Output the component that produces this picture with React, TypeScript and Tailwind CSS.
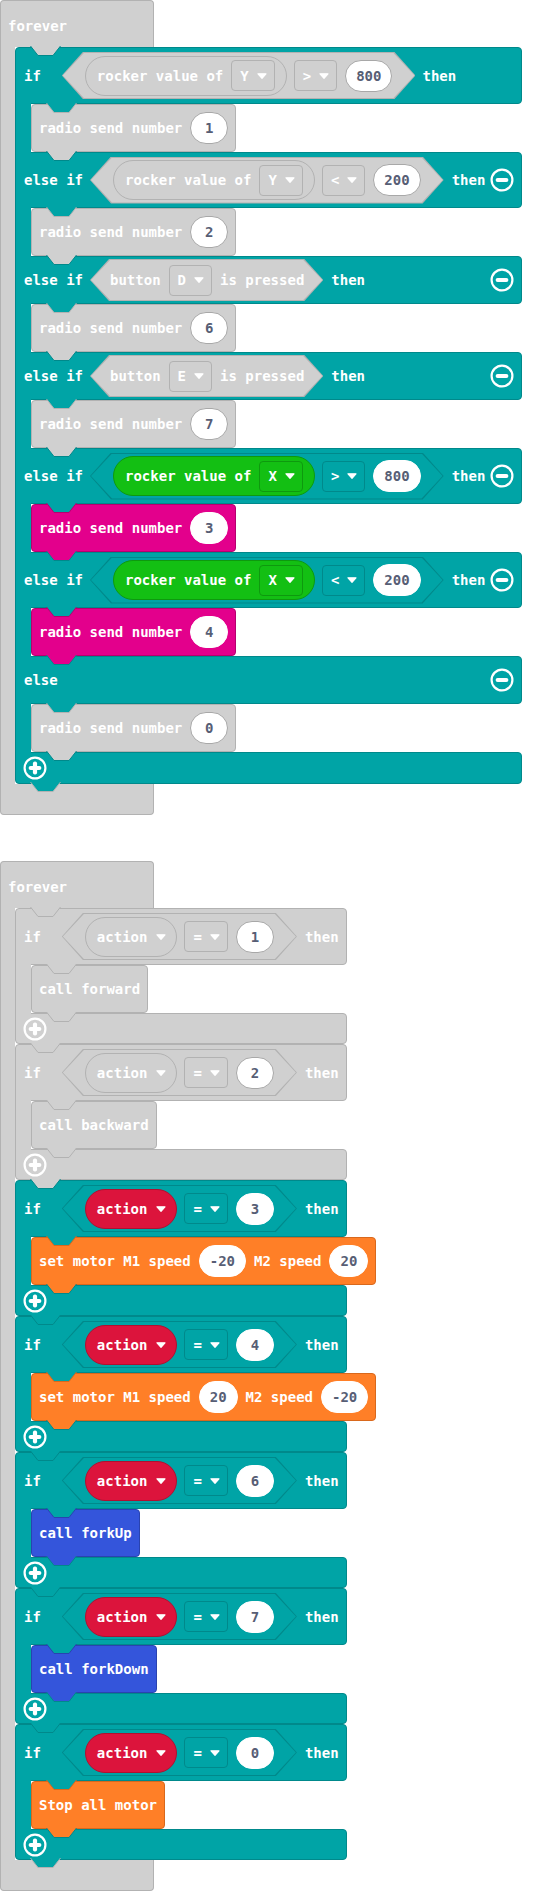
import React from "react";
import clsx from "clsx";

type Theme = { bg: string; border: string; stroke: string; fill: string; dark: string };

const GREY: Theme = { bg: "bg-[#d0d0d0]", border: "border-[#b2b2b2]", stroke: "bg-[#b2b2b2]", fill: "#d0d0d0", dark: "#b2b2b2" };
const TEAL: Theme = { bg: "bg-[#00a4a6]", border: "border-[#00898b]", stroke: "bg-[#00898b]", fill: "#00a4a6", dark: "#00898b" };
const PINK: Theme = { bg: "bg-[#e3008c]", border: "border-[#b6006f]", stroke: "bg-[#b6006f]", fill: "#e3008c", dark: "#b6006f" };
const GREEN: Theme = { bg: "bg-[#13bf13]", border: "border-[#0e990e]", stroke: "bg-[#0e990e]", fill: "#13bf13", dark: "#0e990e" };
const RED: Theme = { bg: "bg-[#dc143c]", border: "border-[#b01030]", stroke: "bg-[#b01030]", fill: "#dc143c", dark: "#b01030" };
const ORANGE: Theme = { bg: "bg-[#ff7f27]", border: "border-[#d9681c]", stroke: "bg-[#d9681c]", fill: "#ff7f27", dark: "#d9681c" };
const BLUE: Theme = { bg: "bg-[#3455db]", border: "border-[#2943b0]", stroke: "bg-[#2943b0]", fill: "#3455db", dark: "#2943b0" };

const CLIP_47 = "[clip-path:polygon(21px_0,calc(100%_-_21px)_0,100%_50%,calc(100%_-_21px)_100%,21px_100%,0_50%)]";
const CLIP_42 = "[clip-path:polygon(19px_0,calc(100%_-_19px)_0,100%_50%,calc(100%_-_19px)_100%,19px_100%,0_50%)]";

// the tab of the block above, sitting in this block's notch
function Notch({ fill, stroke, at }: { fill: string; stroke: string; at: string }) {
  return (
    <svg width="31" height="11" viewBox="0 0 31 11" className={clsx("absolute top-[-2px] z-[2]", at)}>
      <path d="M0.5 0 L8 9.5 L23 9.5 L30.5 0" fill={fill} stroke={stroke} />
    </svg>
  );
}

function Arrow() {
  return (
    <svg width="10" height="6" viewBox="0 0 10 6" className="shrink-0">
      <path d="M1 0.8 H9 L5 5.3 Z" fill="white" stroke="white" strokeWidth="1.2" strokeLinejoin="round" />
    </svg>
  );
}

function Minus() {
  return (
    <svg width="24" height="24" viewBox="0 0 24 24">
      <circle cx="12" cy="12" r="10.4" fill="none" stroke="white" strokeWidth="2.2" />
      <rect x="5.6" y="9.9" width="12.8" height="4.2" rx="2" fill="white" />
    </svg>
  );
}

function Plus() {
  return (
    <svg width="24" height="24" viewBox="0 0 24 24">
      <circle cx="12" cy="12" r="10.4" fill="none" stroke="white" strokeWidth="2.2" />
      <rect x="5.6" y="9.9" width="12.8" height="4.2" rx="2" fill="white" />
      <rect x="9.9" y="5.6" width="4.2" height="12.8" rx="2" fill="white" />
    </svg>
  );
}

function Val({ v, grey, className }: { v: string; grey?: boolean; className?: string }) {
  return (
    <span
      className={clsx(
        "flex h-[32px] min-w-[38px] shrink-0 items-center justify-center rounded-full border bg-white px-[10px] text-[#575e75]",
        grey ? "border-[#a8a8a8]" : "border-white",
        className
      )}
    >
      {v}
    </span>
  );
}

function Dd({ t, children }: { t: Theme; children: React.ReactNode }) {
  return (
    <span className={clsx("flex h-[31px] shrink-0 items-center gap-[8px] rounded-[4px] border pl-[8px] pr-[7px]", t.border)}>
      {children}
      <Arrow />
    </span>
  );
}

function Rocker({ t, axis }: { t: Theme; axis: string }) {
  return (
    <span className={clsx("flex h-[40px] shrink-0 items-center gap-[8px] rounded-full border px-[11px]", t.bg, t.border)}>
      rocker value of
      <Dd t={t}>{axis}</Dd>
    </span>
  );
}

function Action({ t }: { t: Theme }) {
  return (
    <span className={clsx("flex h-[40px] shrink-0 items-center gap-[9px] rounded-full border pl-[11px] pr-[10px]", t.bg, t.border)}>
      action
      <Arrow />
    </span>
  );
}

function Hex({ t, small, className, children }: { t: Theme; small?: boolean; className?: string; children: React.ReactNode }) {
  const clip = small ? CLIP_42 : CLIP_47;
  return (
    <div className={clsx("relative flex shrink-0 items-center", small ? "h-[42px] pl-[20px] pr-[19px]" : "h-[47px] px-[23px]", className)}>
      <div className={clsx("absolute inset-0", t.stroke, clip)} />
      <div className={clsx("absolute inset-px", t.bg, clip)} />
      <div className={clsx("relative flex items-center", small ? "gap-[8px]" : "gap-[7px]")}>{children}</div>
    </div>
  );
}

function CondRow({
  t,
  h,
  label,
  notch,
  notchAt,
  minus,
  first,
  children,
}: {
  t: Theme;
  h: string;
  label: string;
  notch: Theme;
  notchAt: string;
  minus?: boolean;
  first?: boolean;
  children?: React.ReactNode;
}) {
  return (
    <div
      className={clsx(
        "relative flex shrink-0 items-center border pl-[8px] pr-[7px]",
        t.bg,
        t.border,
        h,
        first ? "rounded-tl-[4px] rounded-r-[4px]" : "rounded-r-[4px]"
      )}
    >
      <Notch fill={notch.fill} stroke={t.dark} at={notchAt} />
      <span>{label}</span>
      {children}
      {minus && (
        <span className="ml-auto flex">
          <Minus />
        </span>
      )}
    </div>
  );
}

function PlusRow({ t, h, notch }: { t: Theme; h: string; notch: Theme }) {
  return (
    <div className={clsx("relative flex shrink-0 items-center rounded-r-[4px] rounded-bl-[4px] border pl-[7px]", t.bg, t.border, h)}>
      <Notch fill={notch.fill} stroke={t.dark} at="left-[30px]" />
      <Plus />
    </div>
  );
}

function Body({ t, children }: { t: Theme; children: React.ReactNode }) {
  return (
    <div className="flex items-start">
      <div className={clsx("relative z-[1] -my-px w-[16px] shrink-0 self-stretch border-l", t.bg, t.border)} />
      {children}
    </div>
  );
}

function Stmt({ t, above, children }: { t: Theme; above: Theme; children: React.ReactNode }) {
  return (
    <div className={clsx("relative flex h-[48px] shrink-0 items-center gap-[8px] rounded-[4px] border px-[7px]", t.bg, t.border)}>
      <Notch fill={above.fill} stroke={t.dark} at="left-[14px]" />
      {children}
    </div>
  );
}

function Radio({ t, v }: { t: Theme; v: string }) {
  return (
    <Stmt t={t} above={TEAL}>
      radio send number
      <Val v={v} grey={t === GREY} />
    </Stmt>
  );
}

function Forever({ className, children }: { className?: string; children: React.ReactNode }) {
  return (
    <div className={clsx("flex flex-col", className)}>
      <div className={clsx("flex h-[47px] w-[154px] items-center rounded-t-[4px] border-x border-t pl-[7px] pt-[3px]", GREY.bg, GREY.border)}>
        forever
      </div>
      <div className="flex">
        <div className={clsx("w-[15px] shrink-0 border-l", GREY.bg, GREY.border)} />
        <div className="flex flex-col items-start">{children}</div>
      </div>
      <div className={clsx("relative h-[31px] w-[154px] rounded-b-[4px] border-x border-b", GREY.bg, GREY.border)}>
        <Notch fill={TEAL.fill} stroke={GREY.dark} at="left-[29px]" />
      </div>
    </div>
  );
}

function ActionIf({ t, v, above, bodyT, children }: { t: Theme; v: string; above: Theme; bodyT: Theme; children: React.ReactNode }) {
  const grey = t === GREY;
  return (
    <div className="flex w-[332px] flex-col">
      <CondRow t={t} h="h-[57px]" label="if" notch={above} notchAt="left-[14px]" first>
        <Hex t={t} className="ml-[21px]">
          <Action t={grey ? GREY : RED} />
          <Dd t={t}>=</Dd>
          <Val v={v} grey={grey} className="ml-px" />
        </Hex>
        <span className="ml-[8px]">then</span>
      </CondRow>
      <Body t={t}>
        <Stmt t={bodyT} above={t}>
          {children}
        </Stmt>
      </Body>
      <PlusRow t={t} h="h-[31px]" notch={bodyT} />
    </div>
  );
}

function Motor({ a, b }: { a: string; b: string }) {
  return (
    <>
      set motor M1 speed
      <Val v={a} />
      M2 speed
      <Val v={b} />
    </>
  );
}

export default function App() {
  return (
    <div className="min-h-screen whitespace-nowrap bg-white font-['DejaVu_Sans_Mono',monospace] text-[14px] font-bold leading-none text-white">
      <Forever>
        <div className="flex w-[507px] flex-col">
          <CondRow t={TEAL} h="h-[57px]" label="if" notch={GREY} notchAt="left-[14px]" first>
            <Hex t={GREY} className="ml-[21px]">
              <Rocker t={GREY} axis="Y" />
              <Dd t={GREY}>&gt;</Dd>
              <Val v="800" grey className="ml-px" />
            </Hex>
            <span className="ml-[7px]">then</span>
          </CondRow>
          <Body t={TEAL}>
            <Radio t={GREY} v="1" />
          </Body>
          <CondRow t={TEAL} h="h-[56px]" label="else if" notch={GREY} notchAt="left-[30px]" minus>
            <Hex t={GREY} className="ml-[7px]">
              <Rocker t={GREY} axis="Y" />
              <Dd t={GREY}>&lt;</Dd>
              <Val v="200" grey className="ml-px" />
            </Hex>
            <span className="ml-[8px]">then</span>
          </CondRow>
          <Body t={TEAL}>
            <Radio t={GREY} v="2" />
          </Body>
          <CondRow t={TEAL} h="h-[48px]" label="else if" notch={GREY} notchAt="left-[30px]" minus>
            <Hex t={GREY} small className="ml-[7px]">
              button
              <Dd t={GREY}>D</Dd>
              is pressed
            </Hex>
            <span className="ml-[8px]">then</span>
          </CondRow>
          <Body t={TEAL}>
            <Radio t={GREY} v="6" />
          </Body>
          <CondRow t={TEAL} h="h-[48px]" label="else if" notch={GREY} notchAt="left-[30px]" minus>
            <Hex t={GREY} small className="ml-[7px]">
              button
              <Dd t={GREY}>E</Dd>
              is pressed
            </Hex>
            <span className="ml-[8px]">then</span>
          </CondRow>
          <Body t={TEAL}>
            <Radio t={GREY} v="7" />
          </Body>
          <CondRow t={TEAL} h="h-[56px]" label="else if" notch={GREY} notchAt="left-[30px]" minus>
            <Hex t={TEAL} className="ml-[7px]">
              <Rocker t={GREEN} axis="X" />
              <Dd t={TEAL}>&gt;</Dd>
              <Val v="800" className="ml-px" />
            </Hex>
            <span className="ml-[8px]">then</span>
          </CondRow>
          <Body t={TEAL}>
            <Radio t={PINK} v="3" />
          </Body>
          <CondRow t={TEAL} h="h-[56px]" label="else if" notch={PINK} notchAt="left-[30px]" minus>
            <Hex t={TEAL} className="ml-[7px]">
              <Rocker t={GREEN} axis="X" />
              <Dd t={TEAL}>&lt;</Dd>
              <Val v="200" className="ml-px" />
            </Hex>
            <span className="ml-[8px]">then</span>
          </CondRow>
          <Body t={TEAL}>
            <Radio t={PINK} v="4" />
          </Body>
          <CondRow t={TEAL} h="h-[48px]" label="else" notch={PINK} notchAt="left-[30px]" minus />
          <Body t={TEAL}>
            <Radio t={GREY} v="0" />
          </Body>
          <PlusRow t={TEAL} h="h-[32px]" notch={GREY} />
        </div>
      </Forever>

      <Forever className="mt-[46px]">
        <ActionIf t={GREY} v="1" above={GREY} bodyT={GREY}>
          call forward
        </ActionIf>
        <ActionIf t={GREY} v="2" above={GREY} bodyT={GREY}>
          call backward
        </ActionIf>
        <ActionIf t={TEAL} v="3" above={GREY} bodyT={ORANGE}>
          <Motor a="-20" b="20" />
        </ActionIf>
        <ActionIf t={TEAL} v="4" above={TEAL} bodyT={ORANGE}>
          <Motor a="20" b="-20" />
        </ActionIf>
        <ActionIf t={TEAL} v="6" above={TEAL} bodyT={BLUE}>
          call forkUp
        </ActionIf>
        <ActionIf t={TEAL} v="7" above={TEAL} bodyT={BLUE}>
          call forkDown
        </ActionIf>
        <ActionIf t={TEAL} v="0" above={TEAL} bodyT={ORANGE}>
          Stop all motor
        </ActionIf>
      </Forever>
    </div>
  );
}
